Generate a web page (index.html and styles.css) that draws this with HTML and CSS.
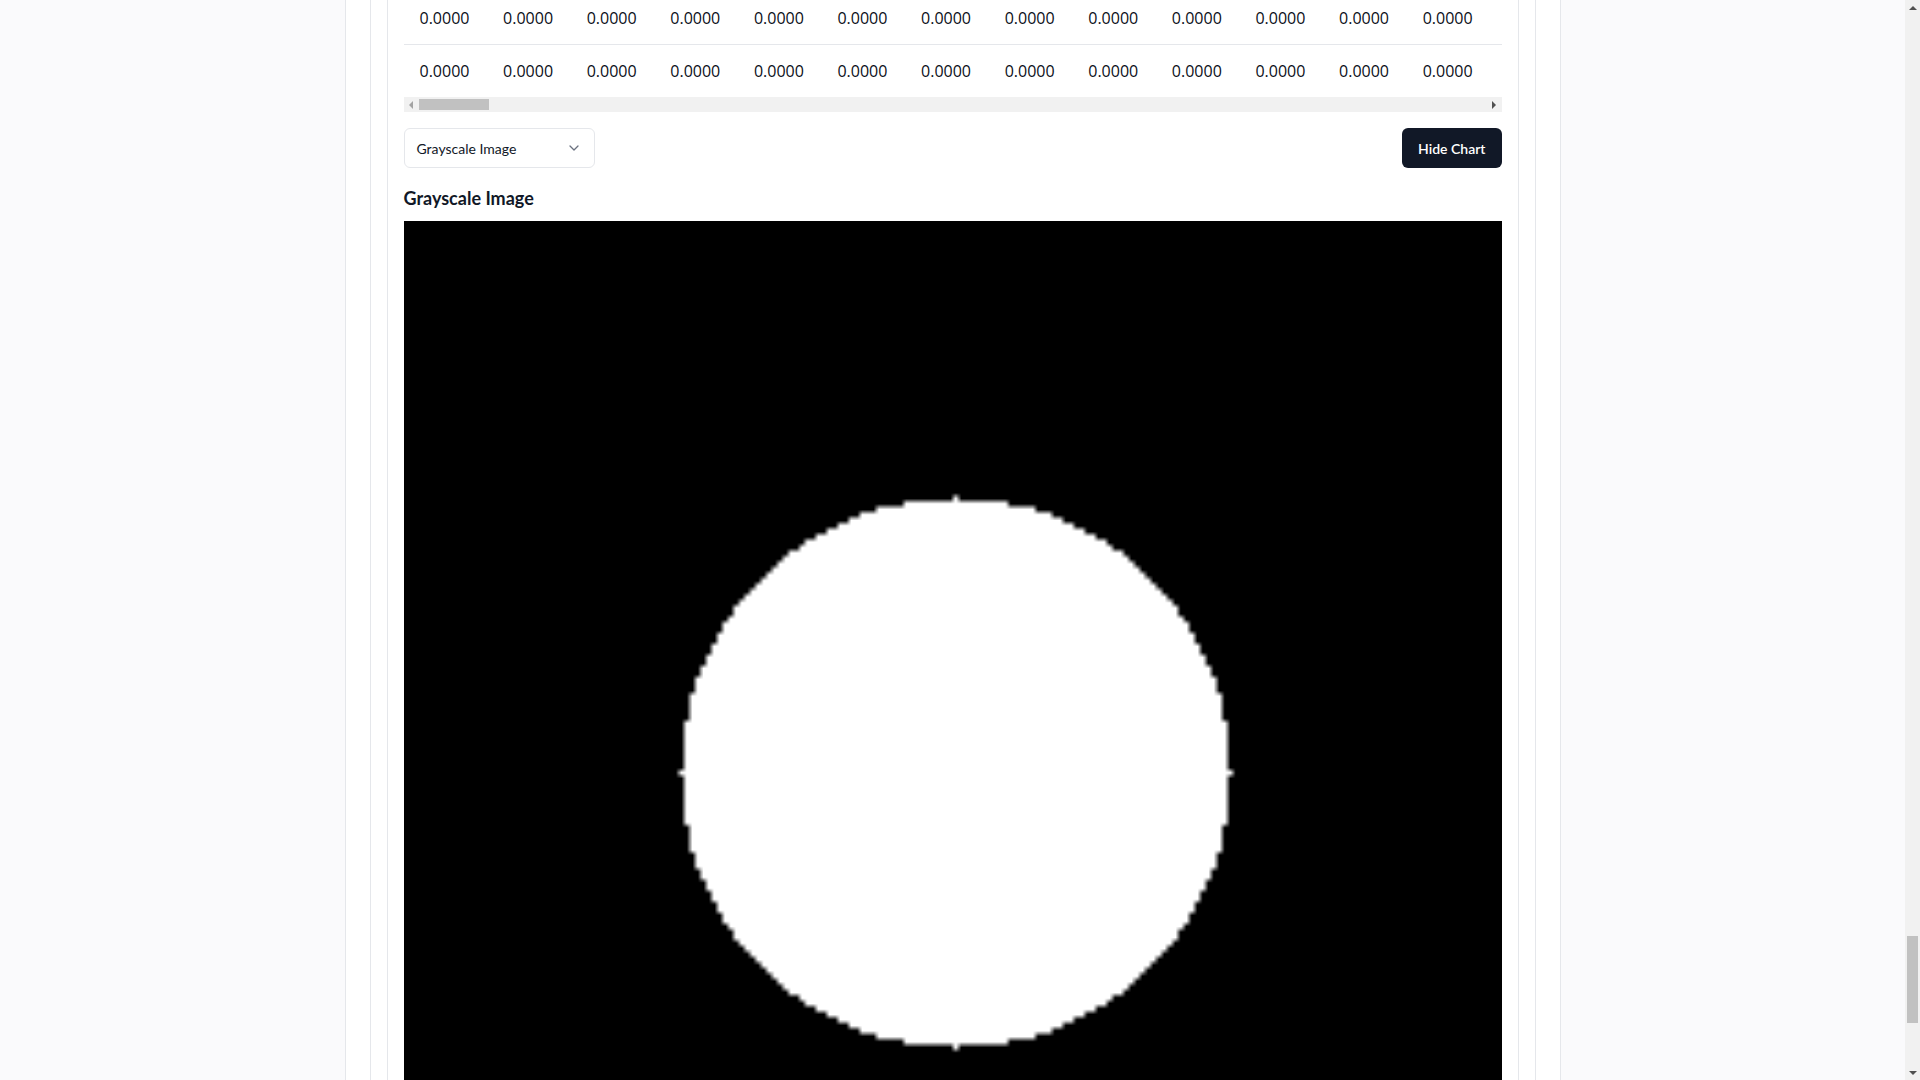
FILE: index.html
```html
<!DOCTYPE html>
<html lang="en">
<head>
<meta charset="utf-8">
<title>Image Matrix Converter</title>
<link rel="stylesheet" href="styles.css">
</head>
<body>
<div class="shell">
  <header class="intro">
    <h1 class="intro-title">Image Matrix Converter</h1>
    <p class="intro-text">Upload an image to convert it into a normalized grayscale matrix.</p>
    <div class="upload">Drop an image here or click to upload</div>
  </header>
  <section class="panel">
    <div class="card">
      <div class="table-wrap">
        <table class="matrix"><tbody id="matrix-body"></tbody></table>
      </div>
      <div class="hscroll">
        <div class="hs-btn"><span class="tri-left"></span></div>
        <div class="hs-track"><div class="hs-thumb"></div></div>
        <div class="hs-btn"><span class="tri-right"></span></div>
      </div>
      <div class="controls">
        <div class="select">
          <span>Grayscale Image</span>
          <svg class="chevron" width="10" height="6" viewBox="0 0 10 6"><path d="M1 1l4 4 4-4" fill="none" stroke="#6b7280" stroke-width="1.3" stroke-linecap="round" stroke-linejoin="round"/></svg>
        </div>
        <button class="btn">Hide Chart</button>
      </div>
      <h3 class="chart-title">Grayscale Image</h3>
      <canvas id="gray" class="gray" width="200" height="200"></canvas>
    </div>
  </section>
</div>
<div class="vscroll">
  <div class="vs-btn"><span class="tri-up"></span></div>
  <div class="vs-track"><div class="vs-thumb"></div></div>
  <div class="vs-btn"><span class="tri-down"></span></div>
</div>
<script src="script.js"></script>
</body>
</html>
```
FILE: styles.css
```css
html, body { margin: 0; }
body {
  background: #fafafc;
  font-family: Lato, "Open Sans", sans-serif;
  color: #111827;
  padding-right: 15px;
}
.shell {
  width: 1216px;
  margin: 0 auto;
  box-sizing: border-box;
  background: #fff;
  border-left: 1px solid #e5e7eb;
  border-right: 1px solid #e5e7eb;
  padding: 24px 24px 250px;
}
.intro { margin-bottom: 24px; }
.intro-title { font-size: 28px; margin: 0 0 8px; }
.intro-text { margin: 0 0 24px; color: #4b5563; }
.upload {
  height: 700px;
  border: 2px dashed #e5e7eb;
  border-radius: 8px;
  display: flex;
  align-items: center;
  justify-content: center;
  color: #6b7280;
}
.panel {
  border: 1px solid #e5e7eb;
  padding: 16px;
}
.card {
  border: 1px solid #e5e7eb;
  padding: 16px;
}
.table-wrap { overflow: hidden; }
.matrix { border-collapse: collapse; width: max-content; }
.matrix td {
  padding: 16px;
  width: 51.6px;
  font-family: "Open Sans", sans-serif;
  font-size: 16px;
  line-height: 20px;
  white-space: nowrap;
  color: #0b0f19;
  border-bottom: 1px solid #e5e7eb;
}
.matrix tr:last-child td { border-bottom: none; }

/* horizontal scrollbar under the table */
.hscroll {
  display: flex;
  height: 15px;
  background: #f1f1f1;
}
.hs-btn {
  width: 15px;
  display: flex;
  align-items: center;
  justify-content: center;
}
.hs-track { flex: 1; display: flex; align-items: center; }
.hs-thumb {
  width: 70px;
  height: 11px;
  background: #c1c1c1;
}
.tri-left {
  width: 0; height: 0;
  border-top: 4px solid transparent;
  border-bottom: 4px solid transparent;
  border-right: 4px solid #a3a3a3;
}
.tri-right {
  width: 0; height: 0;
  border-top: 4px solid transparent;
  border-bottom: 4px solid transparent;
  border-left: 4px solid #505050;
}

/* page scrollbar */
.vscroll {
  position: fixed;
  top: 0;
  right: 0;
  width: 15px;
  height: 100vh;
  background: #f1f1f1;
  display: flex;
  flex-direction: column;
}
.vs-btn {
  height: 15px;
  display: flex;
  align-items: center;
  justify-content: center;
}
.vs-track { flex: 1; display: flex; justify-content: center; }
.vs-thumb {
  width: 11px;
  height: 87px;
  margin-top: 921px;
  background: #c1c1c1;
}
.tri-up {
  width: 0; height: 0;
  border-left: 4px solid transparent;
  border-right: 4px solid transparent;
  border-bottom: 4px solid #505050;
}
.tri-down {
  width: 0; height: 0;
  border-left: 4px solid transparent;
  border-right: 4px solid transparent;
  border-top: 4px solid #505050;
}

.controls {
  display: flex;
  justify-content: space-between;
  align-items: center;
  margin-top: 16px;
}
.select {
  width: 191px;
  height: 40px;
  box-sizing: border-box;
  border: 1px solid #e5e7eb;
  border-radius: 6px;
  padding: 0 15px 0 12px;
  display: flex;
  align-items: center;
  justify-content: space-between;
  font-size: 14px;
}
.btn {
  height: 40px;
  padding: 0 16px;
  border: none;
  border-radius: 6px;
  background: #111827;
  color: #fff;
  font-family: Lato, sans-serif;
  font-size: 14px;
  font-weight: 600;
}
.chart-title {
  margin: 16px 0 9px;
  font-size: 18px;
  line-height: 28px;
  font-weight: 700;
}
.gray {
  display: block;
  width: 1098px;
  height: 1098px;
}
```
FILE: script.js
```js
(function () {
  var N = 200, C = 100, R = 50;
  var data = [];
  for (var y = 0; y < N; y++) {
    var row = [];
    for (var x = 0; x < N; x++) {
      var dx = x - C, dy = y - C;
      row.push(dx * dx + dy * dy <= R * R ? 1 : 0);
    }
    data.push(row);
  }
  var html = [];
  for (var i = 0; i < N; i++) {
    var cells = [];
    for (var j = 0; j < N; j++) cells.push('<td>' + data[i][j].toFixed(4) + '</td>');
    html.push('<tr>' + cells.join('') + '</tr>');
  }
  var tbody = document.getElementById('matrix-body');
  tbody.innerHTML = html.join('');

  var canvas = document.getElementById('gray');
  var ctx = canvas.getContext('2d');
  var img = ctx.createImageData(N, N);
  for (var p = 0; p < N * N; p++) {
    var v = data[Math.floor(p / N)][p % N] * 255;
    img.data[p * 4] = v;
    img.data[p * 4 + 1] = v;
    img.data[p * 4 + 2] = v;
    img.data[p * 4 + 3] = 255;
  }
  ctx.putImageData(img, 0, 0);

  var target = tbody.rows[N - 2].getBoundingClientRect();
  window.scrollTo(0, target.bottom + window.scrollY - 45);
})();
```
